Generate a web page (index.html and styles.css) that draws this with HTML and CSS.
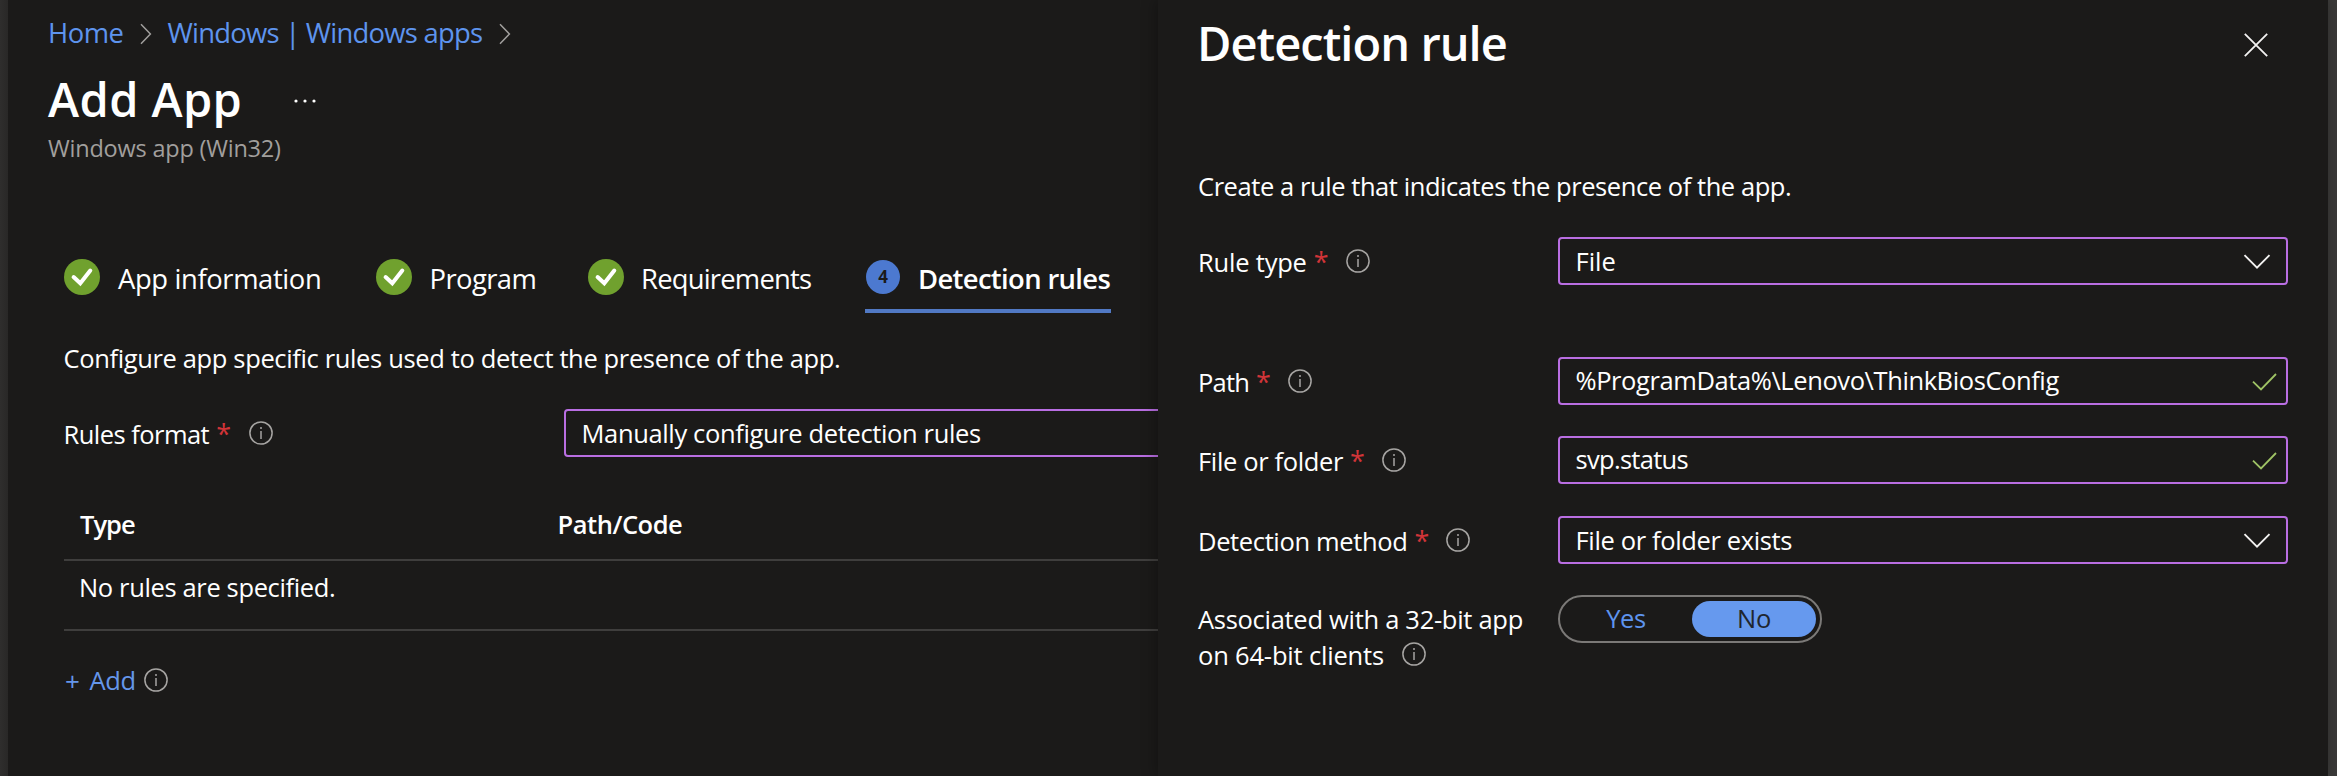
FILE: index.html
```html
<!DOCTYPE html>
<html lang="en">
<head>
<meta charset="utf-8">
<title>Add App</title>
<link rel="stylesheet" href="styles.css">
</head>
<body>
<svg class="defs" aria-hidden="true">
  <symbol id="info" viewBox="0 0 24 24"><circle cx="12" cy="12" r="11.1" fill="none" stroke="#a6a4a2" stroke-width="1.5"/><path d="M12 10v8M12 6v2" stroke="#a6a4a2" stroke-width="1.5"/></symbol>
  <symbol id="done" viewBox="0 0 36 36"><circle cx="18" cy="18" r="18" fill="#70a12e"/><path d="M9.6 18l6.7 6.3 10-12.8" fill="none" stroke="#fff" stroke-width="4" stroke-linecap="round" stroke-linejoin="miter"/></symbol>
  <symbol id="sep" viewBox="0 0 12 22"><path d="M1 1.2l9.4 9.8L1 20.8" fill="none" stroke="#a19f9d" stroke-width="1.5"/></symbol>
  <symbol id="chev" viewBox="0 0 28 16"><path d="M1.5 1.2L14 13.7 26.5 1.2" fill="none" stroke="#f3f2f1" stroke-width="1.9"/></symbol>
  <symbol id="valid" viewBox="0 0 25 18"><path d="M1 8.6l8 7.9L24 1" fill="none" stroke="#9fc365" stroke-width="1.8"/></symbol>
</svg>
<div class="page">
  <div class="edge edge-left"></div>
  <main class="main">
    <nav class="crumbs">
      <a class="crumb-home">Home</a><svg class="sep"><use href="#sep"/></svg><a class="crumb-apps">Windows | Windows apps</a><svg class="sep"><use href="#sep"/></svg>
    </nav>
    <div class="title-row">
      <h1 class="title">Add App</h1>
      <svg class="dots" viewBox="0 0 22 4"><g fill="#fff"><circle cx="2" cy="2" r="1.6"/><circle cx="11" cy="2" r="1.6"/><circle cx="20" cy="2" r="1.6"/></g></svg>
    </div>
    <div class="subtitle">Windows app (Win32)</div>
    <div class="tabs">
      <div class="tab"><svg class="badge"><use href="#done"/></svg><span>App information</span></div>
      <div class="tab"><svg class="badge"><use href="#done"/></svg><span class="t-program">Program</span></div>
      <div class="tab"><svg class="badge"><use href="#done"/></svg><span class="t-req">Requirements</span></div>
      <div class="tab active"><span class="badge number">4</span><span class="t-rules">Detection rules</span></div>
    </div>
    <p class="intro">Configure app specific rules used to detect the presence of the app.</p>
    <div class="format-row">
      <label class="label"><span class="l-tight">Rules format</span><span class="star">*</span><svg class="info"><use href="#info"/></svg></label>
      <div class="field cut">Manually configure detection rules</div>
    </div>
    <div class="thead"><span class="th-type">Type</span><span class="th-path">Path/Code</span></div>
    <div class="trow">No rules are specified.</div>
    <div class="add"><span class="plus">+</span><span>Add</span><svg class="info"><use href="#info"/></svg></div>
  </main>
  <aside class="panel">
    <header class="panel-head">
      <h2 class="panel-title">Detection rule</h2>
      <svg class="close" viewBox="0 0 24 24"><path d="M.8.8l22.4 22.4M23.2.8L.8 23.2" stroke="#f3f2f1" stroke-width="1.8"/></svg>
    </header>
    <p class="panel-intro">Create a rule that indicates the presence of the app.</p>
    <div class="form-row r-type">
      <label class="label"><span class="l-type">Rule type</span><span class="star">*</span><svg class="info"><use href="#info"/></svg></label>
      <div class="field"><span class="v-file">File</span><svg class="chev"><use href="#chev"/></svg></div>
    </div>
    <div class="form-row r-path">
      <label class="label"><span class="l-path">Path</span><span class="star">*</span><svg class="info"><use href="#info"/></svg></label>
      <div class="field text"><span class="v-path">%ProgramData%\Lenovo\ThinkBiosConfig</span><svg class="valid"><use href="#valid"/></svg></div>
    </div>
    <div class="form-row r-file">
      <label class="label"><span class="l-file">File or folder</span><span class="star">*</span><svg class="info"><use href="#info"/></svg></label>
      <div class="field text"><span class="v-svp">svp.status</span><svg class="valid"><use href="#valid"/></svg></div>
    </div>
    <div class="form-row r-method">
      <label class="label"><span>Detection method</span><span class="star">*</span><svg class="info"><use href="#info"/></svg></label>
      <div class="field"><span>File or folder exists</span><svg class="chev"><use href="#chev"/></svg></div>
    </div>
    <div class="form-row r-assoc">
      <label class="label two"><span>Associated with a 32-bit app</span><span class="line2"><span class="l-64">on 64-bit clients</span><svg class="info"><use href="#info"/></svg></span></label>
      <div class="toggle"><span class="yes">Yes</span><span class="no">No</span></div>
    </div>
  </aside>
  <div class="edge edge-right"></div>
</div>
</body>
</html>
```
FILE: styles.css
```css
* { box-sizing: border-box; }
body {
  margin: 0;
  background: #1b1a19;
  color: #fff;
  font: 25.5px/36px "Open Sans", "Noto Sans", sans-serif;
  letter-spacing: -0.36px;
  overflow: hidden;
}
h1, h2, p { margin: 0; }
svg { display: block; flex: none; }
.defs { position: absolute; width: 0; height: 0; }
.page { display: flex; width: 2337px; height: 776px; white-space: nowrap; }
.edge { flex: none; width: 8px; }
.edge-left { background: linear-gradient(90deg, #2f2e2d, #292827); }
.edge-right { width: 9px; background: #3b3a39; }

.main { flex: none; width: 1150px; padding: 15px 0 0 40px; overflow: hidden; }
.crumbs { display: flex; align-items: center; height: 36px; font-size: 27.4px; color: #5e94ee; }
.crumb-home { width: 91.5px; letter-spacing: -0.51px; }
.crumb-apps { width: 331px; margin-left: 16px; letter-spacing: -0.75px; }
.sep { width: 12px; height: 22px; margin-top: 2px; }
.title-row { display: flex; align-items: center; height: 66px; margin-top: 15px; }
.title { width: 246px; font-size: 47px; line-height: 66px; font-weight: 600; letter-spacing: 0.4px; }
.dots { width: 22px; height: 4px; margin-top: 4px; }
.subtitle { height: 32px; line-height: 33px; font-size: 23.5px; letter-spacing: -0.21px; color: #a19f9d; }

.tabs {
  display: grid;
  grid-template-columns: 312px 212px 277px 246px;
  margin: 85px 0 0 16px;
  height: 64px;
  font-size: 27.4px;
  letter-spacing: -0.38px;
}
.tab { display: flex; align-items: center; gap: 18px; height: 60px; }
.badge { width: 36px; height: 36px; margin-bottom: 5px; }
.t-program { letter-spacing: -0.57px; margin-left: -0.5px; }
.t-req { letter-spacing: -0.78px; margin-left: -1px; }
.active { height: 64px; border-bottom: 4px solid #5179c4; font-weight: 600; gap: 18px; }
.number {
  flex: none;
  margin-left: 1px;
  width: 34px;
  height: 34px;
  border-radius: 50%;
  background: #4c79d0;
  color: #1b1a19;
  font-size: 17px;
  line-height: 34px;
  font-weight: 700;
  text-align: center;
  letter-spacing: 0;
}
.t-rules { letter-spacing: -0.64px; }
.intro { margin: 27px 0 0 15.5px; letter-spacing: -0.36px; }

.label { display: flex; align-items: center; height: 50px; }
.star { color: #d13438; margin-left: 7px; letter-spacing: 0; width: 14px; font-size: 27px; }
.info { width: 24px; height: 24px; margin: 0 0 0 18px; }
.label .info { margin-bottom: 2px; }
.format-row .label .info { margin-left: 19px; }
.field {
  display: flex;
  align-items: center;
  justify-content: space-between;
  height: 48px;
  padding: 0 15px 0 15.5px;
  border: 2px solid #b96ee2;
  border-radius: 4px;
}
.format-row { display: grid; grid-template-columns: 500px 600px; margin: 33px 0 0 16px; height: 48px; }
.format-row .label { margin-left: -0.5px; }
.l-tight { letter-spacing: -0.54px; }
.thead {
  display: flex;
  align-items: center;
  margin: 30px 0 0 16px;
  height: 74px;
  padding: 1px 0 0 16px;
  border-bottom: 2px solid #3f3e3d;
  font-weight: 600;
}
.th-type { width: 477.5px; letter-spacing: -0.98px; }
.th-path { letter-spacing: -0.46px; }
.trow { margin-left: 16px; height: 70px; padding: 8px 0 0 15px; border-bottom: 2px solid #3f3e3d; }
.add { display: flex; align-items: center; margin: 29px 0 0 17px; color: #6596ea; }
.plus { width: 23.5px; font-size: 26px; padding-top: 3px; }
.add span + span { margin-left: 1px; }
.add .info { margin-left: 8px; }

.panel {
  flex: none;
  width: 1170px;
  padding: 10px 40px 0;
  position: relative;
  background: #1b1a19;
  box-shadow: -2px 0 14px rgba(0, 0, 0, 0.3);
}
.panel-head { display: flex; justify-content: space-between; align-items: center; height: 66px; padding: 0 20px 0 0; }
.panel-title { font-size: 47px; line-height: 66px; font-weight: 600; letter-spacing: -0.96px; margin-left: -1px; }
.close { width: 24px; height: 24px; margin-top: 4px; }
.panel-intro { margin-top: 92px; letter-spacing: -0.43px; }
.form-row { display: grid; grid-template-columns: 360px 730px; height: 48px; }
.r-type { margin-top: 33px; }
.r-path { margin-top: 72px; }
.r-file { margin-top: 31px; }
.r-method { margin-top: 32px; }
.r-assoc { margin-top: 31px; }
.text { padding: 0 9.5px 2px 15.5px; }
.chev { width: 28px; height: 16px; margin-top: 2px; }
.valid { width: 25px; height: 18px; margin-top: 4px; }
.v-file { letter-spacing: 0; }
.l-type { letter-spacing: -0.2px; }
.l-path { letter-spacing: -0.8px; }
.v-path { letter-spacing: -0.41px; }
.v-svp { letter-spacing: -0.7px; }
.two { display: block; height: 78px; padding-top: 6px; letter-spacing: -0.29px; }
.two > span { display: block; }
.two .line2 { display: flex; align-items: center; }
.l-64 { letter-spacing: -0.18px; }
.toggle {
  display: flex;
  width: 264px;
  height: 48px;
  padding: 4px;
  border: 2px solid #7b7977;
  border-radius: 24px;
  text-align: center;
  line-height: 35px;
}
.yes { width: 128px; padding-right: 4px; color: #5e94ee; }
.no { width: 124px; border-radius: 18px; background: #6699ee; color: #20262f; }
```
